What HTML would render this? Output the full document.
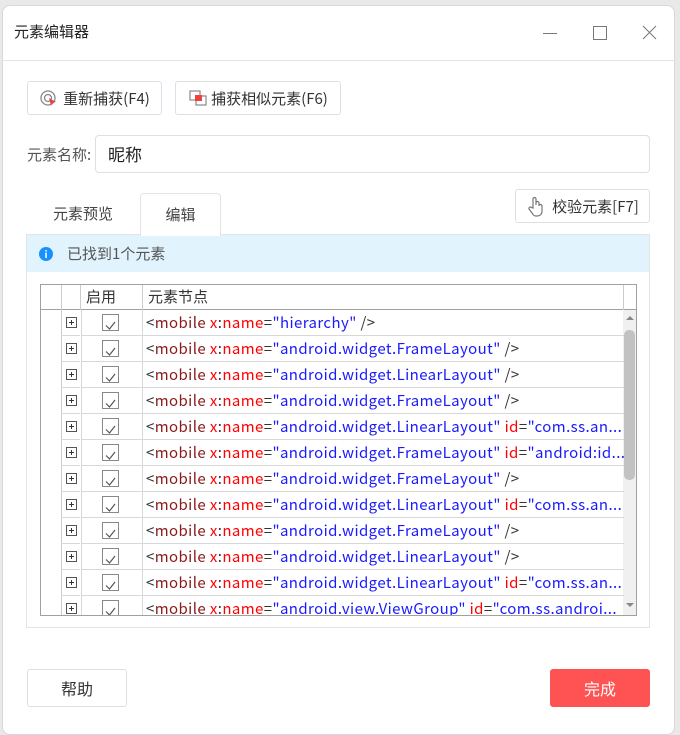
<!DOCTYPE html>
<html><head><meta charset="utf-8"><style>
*{box-sizing:border-box;margin:0;padding:0}
body{width:680px;height:725px;background:#e9e9e9;font-family:"Noto Sans CJK SC","Liberation Sans",sans-serif;position:relative;overflow:hidden;color:#333}
.dlg{position:absolute;left:2px;top:5px;width:673px;height:730px;background:#fff;border-radius:8px;border:1px solid #d8d8d8}
.abs{position:absolute;line-height:1.2}
.btn{position:absolute;border:1px solid #dcdfe6;border-radius:3px;background:#fff;font-size:15px;color:#333;display:flex;align-items:center;justify-content:center}
.row{position:absolute;left:0;width:583px;height:26px;font-size:15px;line-height:25px;white-space:nowrap;letter-spacing:0.4px}
.cell{position:absolute;top:0;height:26px;border-bottom:1px solid #d8d8d8}
.t{color:#8b1a1a}.a{color:#ff0000}.s{color:#1a1aff}.p{color:#333}
.exp{position:absolute;left:5px;top:7px;width:11px;height:11px;border:1px solid #555;font-size:0}
.exp:before{content:"";position:absolute;left:2px;top:4px;width:5px;height:1px;background:#333}
.exp:after{content:"";position:absolute;left:4px;top:2px;width:1px;height:5px;background:#333}
.cb{position:absolute;left:20px;top:4px;width:17px;height:17px;border:1px solid #888;background:#fff}
</style></head><body>
<div class="dlg"></div>
<div class="abs" style="left:14px;top:23px;font-size:15px;color:#222">元素编辑器</div>
<div class="abs" style="left:543px;top:33px;width:14px;height:1px;background:#777"></div>
<div class="abs" style="left:593px;top:26px;width:14px;height:14px;border:1px solid #777"></div>
<svg class="abs" style="left:642px;top:25px" width="15" height="15"><path d="M1 1L14 14M14 1L1 14" stroke="#777" stroke-width="1"/></svg>
<div class="abs" style="left:2px;top:60px;width:673px;height:1px;background:#e4e4e4"></div>

<div class="btn" style="left:27px;top:81px;width:135px;height:34px"><svg width="20" height="20" style="margin-right:4px"><circle cx="9" cy="10" r="7" fill="none" stroke="#888" stroke-width="1.3"/><circle cx="9" cy="10" r="3.5" fill="none" stroke="#888" stroke-width="1.3"/><path d="M10 10L17 14L13 15L12 18Z" fill="#f04040"/></svg>重新捕获(F4)</div>
<div class="btn" style="left:175px;top:81px;width:166px;height:34px"><svg width="20" height="20" style="margin-right:3px"><rect x="2" y="3" width="10" height="9" fill="none" stroke="#888" stroke-width="1.2"/><rect x="8" y="8" width="10" height="9" fill="none" stroke="#888" stroke-width="1.2"/><rect x="7" y="7" width="7" height="6" fill="#f04040"/></svg>捕获相似元素(F6)</div>

<div class="abs" style="left:27px;top:146px;font-size:15px;color:#555">元素名称:</div>
<div class="abs" style="left:95px;top:135px;width:555px;height:38px;border:1px solid #dcdfe6;border-radius:4px;font-size:17px;line-height:36px;padding-left:12px;color:#222">昵称</div>

<div class="abs" style="left:53px;top:205px;font-size:15px;color:#444">元素预览</div>
<div class="abs" style="left:140px;top:193px;width:81px;height:43px;border:1px solid #e4e4e4;border-bottom:none;border-radius:4px 4px 0 0;background:#fff;font-size:15px;text-align:center;line-height:42px;color:#444;z-index:2">编辑</div>
<div class="btn" style="left:515px;top:189px;width:135px;height:34px"><svg width="20" height="22" style="margin-right:6px"><path d="M7 13V4a1.5 1.5 0 0 1 3 0v6V8a1.5 1.5 0 0 1 3 0v3a1.5 1.5 0 0 1 3 0v5c0 3-2 5-5 5h-1c-2 0-3-1-4-3l-3-4a1.5 1.5 0 0 1 2.5-1.5z" fill="none" stroke="#777" stroke-width="1.2"/></svg>校验元素[F7]</div>

<div class="abs" style="left:26px;top:234px;width:624px;height:394px;border:1px solid #e4e4e4"></div>
<div class="abs" style="left:27px;top:235px;width:622px;height:37px;background:#e1f3fd"></div>
<div class="abs" style="left:39px;top:247px;width:14px;height:14px;border-radius:50%;background:#1890ff;color:#fff;font-size:10px;text-align:center;line-height:14px;font-weight:bold">i</div>
<div class="abs" style="left:67px;top:245px;font-size:15px;color:#555">已找到1个元素</div>

<div class="abs" style="left:40px;top:284px;width:597px;height:332px;border:1px solid #a0a0a0;overflow:hidden">
 <div class="abs" style="left:0;top:0;width:595px;height:25px;border-bottom:1px solid #a0a0a0;font-size:15px;line-height:24px">
  <div class="abs" style="left:20px;top:0;width:1px;height:25px;background:#ccc"></div>
  <div class="abs" style="left:39px;top:0;width:1px;height:25px;background:#ccc"></div>
  <div class="abs" style="left:101px;top:0;width:1px;height:25px;background:#ccc"></div>
  <div class="abs" style="left:582px;top:0;width:1px;height:25px;background:#ccc"></div>
  <div class="abs" style="left:45px;line-height:24px">启用</div>
  <div class="abs" style="left:107px;line-height:24px">元素节点</div>
 </div>
 <div class="abs" style="left:20px;top:25px;width:1px;height:310px;background:#ccc"></div>
 <div class="abs" style="left:582px;top:25px;width:13px;height:310px;background:#f0f0f0"></div>
 <div class="abs" style="left:583px;top:45px;width:11px;height:150px;background:#c2c2c2;border-radius:5px"></div>
 <div class="abs" style="left:585px;top:31px;width:0;height:0;border:4px solid transparent;border-bottom-color:#888;border-top:none"></div>
 <div class="abs" style="left:585px;top:318px;width:0;height:0;border:4px solid transparent;border-top-color:#888;border-bottom:none"></div>
 <div id="rows" class="abs" style="left:0;top:25px;width:583px;height:310px"></div>
</div>
<script>
var d=[["hierarchy",""],["android.widget.FrameLayout",""],["android.widget.LinearLayout",""],["android.widget.FrameLayout",""],["android.widget.LinearLayout","com.ss.an..."],["android.widget.FrameLayout","android:id..."],["android.widget.FrameLayout",""],["android.widget.LinearLayout","com.ss.an..."],["android.widget.FrameLayout",""],["android.widget.LinearLayout",""],["android.widget.LinearLayout","com.ss.an..."],["android.view.ViewGroup","com.ss.androi..."]];
var h="";d.forEach(function(r,i){
h+='<div class="row" style="top:'+(i*26)+'px"><div class="cell" style="left:20px;width:19px"><div class="exp"></div></div><div class="cell" style="left:40px;width:61px;border-left:1px solid #d8d8d8"><div class="cb"><svg width="15" height="15"><path d="M3 7.5L6.5 11L12 4" fill="none" stroke="#555" stroke-width="1.2"/></svg></div></div><div class="cell" style="left:101px;width:482px;border-left:1px solid #d8d8d8;padding-left:3px;overflow:hidden"><span class="p">&lt;</span><span class="t">mobile</span> <span class="a">x</span><span class="p">:</span><span class="a">name</span><span class="p">=</span><span class="s">"'+r[0]+'"</span> '+(r[1]?'<span class="a">id</span><span class="p">=</span><span class="s">"'+r[1]+'</span>':'<span class="p">/&gt;</span>')+'</div></div>';});
document.getElementById("rows").innerHTML=h;
</script>

<div class="btn" style="left:27px;top:669px;width:100px;height:38px;font-size:16px">帮助</div>
<div class="btn" style="left:550px;top:669px;width:100px;height:38px;font-size:16px;background:#ff5252;border-color:#ff5252;color:#fff">完成</div>
</body></html>
